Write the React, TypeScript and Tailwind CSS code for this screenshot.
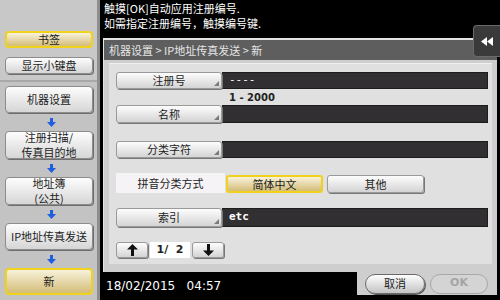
import React from "react";

const font = "font-['Noto_Sans_CJK_SC','Noto_Sans',sans-serif]";

// yellow = selected state on this panel
function SideBtn({ children, active, h = "h-[27px]" }: { children: React.ReactNode; active?: boolean; h?: string }) {
  return (
    <div
      className={`${h} w-[88px] flex items-center justify-center text-center text-[11px] leading-[15px] text-[#1c1c1c] rounded-[4px] whitespace-nowrap ${
        active
          ? "border-2 border-[#f0d21c] bg-linear-to-b from-[#f8f2da] to-[#d4bd78]"
          : "border border-[#8c8c8c] bg-linear-to-b from-[#fdfdfd] to-[#d6d6d6] shadow-[1px_1px_0_#6e6e6e]"
      }`}
    >
      <div>{children}</div>
    </div>
  );
}

function BlueArrow() {
  return (
    <div className="h-[18px] flex items-center justify-center">
      <svg width="9" height="9" viewBox="0 0 9 9">
        <rect x="3" y="0" width="3" height="4" fill="#1e5ee0" />
        <polygon points="0,4 9,4 4.5,9" fill="#1e5ee0" />
      </svg>
    </div>
  );
}

function LabelBtn({ children }: { children: React.ReactNode }) {
  return (
    <div className="relative w-[106px] h-full flex items-center justify-center text-[11px] text-[#1c1c1c] rounded-[3px] border border-[#9a9a9a] bg-linear-to-b from-[#fdfdfd] to-[#d4d4d4] shadow-[1px_1px_0_#777]">
      {children}
      <svg className="absolute right-[2px] bottom-[2px]" width="5" height="5" viewBox="0 0 5 5">
        <polygon points="5,0 5,5 0,5" fill="#7a7a7a" />
      </svg>
    </div>
  );
}

function Field({ children, bold }: { children?: React.ReactNode; bold?: boolean }) {
  return (
    <div
      className={`flex-1 h-full bg-[#312f31] border border-[#1d1c1d] flex items-center pl-[6px] text-white text-[11px] font-['DejaVu_Sans_Mono',monospace] ${
        bold ? "font-bold" : ""
      }`}
    >
      {children}
    </div>
  );
}

function ArrowBtn({ up }: { up?: boolean }) {
  return (
    <div className="w-[32px] h-full flex items-center justify-center rounded-[3px] border border-[#9a9a9a] bg-linear-to-b from-[#fdfdfd] to-[#d4d4d4] shadow-[1px_1px_0_#777]">
      <svg width="11" height="12" viewBox="0 0 11 12" className={up ? "" : "rotate-180"}>
        <polygon points="5.5,0 11,5.5 7,5.5 7,12 4,12 4,5.5 0,5.5" fill="#111" />
      </svg>
    </div>
  );
}

export default function App() {
  return (
    <div className={`relative w-[500px] h-[300px] flex bg-black overflow-hidden ${font}`}>
      {/* left sidebar */}
      <aside className="w-[100px] h-full bg-[#c8c8c8] border-r-[3px] border-[#8e8e8e] flex flex-col">
        <div className="flex flex-col gap-[9px] pl-[5px] pt-[31px] pb-[6px]">
          <SideBtn active h="h-[17px]">书签</SideBtn>
          <SideBtn h="h-[17px]">显示小键盘</SideBtn>
        </div>
        <div className="flex-1 border-t-2 border-[#a9a9a9] bg-[#c3c3c3] pl-[5px] pt-[4px]">
          <SideBtn>机器设置</SideBtn>
          <BlueArrow />
          <SideBtn h="h-[28px]">
            注册扫描/
            <br />
            传真目的地
          </SideBtn>
          <BlueArrow />
          <SideBtn h="h-[28px]">
            地址簿
            <br />
            (公共)
          </SideBtn>
          <BlueArrow />
          <SideBtn>IP地址传真发送</SideBtn>
          <BlueArrow />
          <SideBtn active>新</SideBtn>
        </div>
      </aside>

      {/* right side */}
      <main className="flex-1 flex flex-col">
        <div className="h-[38px] pl-[4px] pt-[1px] text-white text-[11px] leading-[15px]">
          <p>触摸[OK]自动应用注册编号.</p>
          <p>如需指定注册编号，触摸编号键.</p>
        </div>

        <div className="mx-[3px] h-[234px] bg-[#cecece] border-l border-t-2 border-[#e4e4e4] flex flex-col">
          <div className="h-[20px] bg-[#5e5e5e] flex items-center pl-[5px] text-[11px] text-[#e6e6e6] whitespace-pre">
            机器设置 &gt; IP地址传真发送 &gt; 新
          </div>
          <div className="flex-1 px-[5px] pt-[3px] pb-[8px] flex">
            <div className="flex-1 bg-[#e1e0e1] border-t border-[#f0f0f0] flex flex-col pl-[7px] pr-[4px]">
              <div className="mt-[8px] h-[17px] flex">
                <LabelBtn>注册号</LabelBtn>
                <Field>----</Field>
              </div>
              <div className="h-[16px] pl-[113px] text-[10px] font-bold text-[#222] font-['DejaVu_Sans',sans-serif] flex items-center">
                1 - 2000
              </div>
              <div className="h-[18px] flex">
                <LabelBtn>名称</LabelBtn>
                <Field />
              </div>
              <div className="mt-[18px] h-[17px] flex">
                <LabelBtn>分类字符</LabelBtn>
                <Field />
              </div>
              <div className="mt-[15px] h-[20px] flex items-end">
                <div className="w-[109px] h-full bg-[#f6f3f6] flex items-center justify-center text-[11px] text-[#1c1c1c]">
                  拼音分类方式
                </div>
                <div className="ml-[1px] w-[97px] h-[18px] flex items-center justify-center text-[11px] text-[#1c1c1c] rounded-[3px] border-2 border-[#f0d21c] bg-linear-to-b from-[#f8f2da] to-[#d4bd78]">
                  简体中文
                </div>
                <div className="ml-[4px] w-[97px] h-[18px] flex items-center justify-center text-[11px] text-[#1c1c1c] rounded-[3px] border border-[#9a9a9a] bg-linear-to-b from-[#fdfdfd] to-[#d4d4d4] shadow-[1px_1px_0_#777]">
                  其他
                </div>
              </div>
              <div className="mt-[15px] h-[19px] flex">
                <LabelBtn>索引</LabelBtn>
                <Field bold>etc</Field>
              </div>
              <div className="mt-[15px] h-[16px] flex gap-[2px]">
                <ArrowBtn up />
                <div className="w-[40px] h-full bg-white flex items-center justify-center text-[11px] font-bold text-[#222] font-['DejaVu_Sans',sans-serif] whitespace-pre">
                  1/  2
                </div>
                <ArrowBtn />
              </div>
            </div>
          </div>
        </div>

        <div className="h-[28px] flex">
          <div className="w-[257px] flex items-center pl-[6px] text-white text-[12px] font-['DejaVu_Sans',sans-serif] whitespace-pre">
            18/02/2015   04:57
          </div>
          <div className="flex-1 mr-[3px] mb-[5px] bg-[#cecece] flex items-center gap-[5px] pl-[8px]">
            <div className="w-[60px] h-[20px] rounded-full border border-[#6a6a6a] bg-linear-to-b from-[#fdfdfd] to-[#c4c4c4] shadow-[1px_1px_0_#555] flex items-center justify-center text-[11px] text-[#1c1c1c]">
              取消
            </div>
            <div className="w-[58px] h-[20px] rounded-full border border-[#a8a8a8] bg-[#d4d4d4] flex items-center justify-center text-[11px] font-bold text-[#a4a4a4] font-['DejaVu_Sans',sans-serif]">
              OK
            </div>
          </div>
        </div>
      </main>

      {/* back button overlays header */}
      <div className="absolute top-[25px] right-0 w-[27px] h-[32px] rounded-l-[4px] bg-[#3a3a3a] border border-r-0 border-[#6a6a6a] flex items-center justify-center">
        <svg width="12" height="9" viewBox="0 0 12 9">
          <polygon points="6,0 6,9 0,4.5" fill="#fff" />
          <polygon points="12,0 12,9 6,4.5" fill="#fff" />
        </svg>
      </div>
    </div>
  );
}
